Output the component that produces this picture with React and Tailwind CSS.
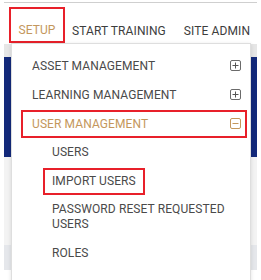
import React from 'react';

const PlusBox = ({ minus }) => (
  <span
    className={`flex h-[11px] w-[11px] items-center justify-center rounded-[2px] border ${
      minus ? 'border-[#c4975c]' : 'border-[#6b6b6b]'
    }`}
  >
    <svg width="7" height="7" viewBox="0 0 7 7">
      <line x1="0.5" y1="3.5" x2="6.5" y2="3.5" stroke={minus ? '#c4975c' : '#555'} strokeWidth="1" />
      {!minus && <line x1="3.5" y1="0.5" x2="3.5" y2="6.5" stroke="#555" strokeWidth="1" />}
    </svg>
  </span>
);

export default function App() {
  const subItems = ['USERS', 'IMPORT USERS', 'PASSWORD RESET REQUESTED USERS', 'ROLES'];

  return (
    <div
      className="relative h-[280px] w-[261px] overflow-hidden bg-white text-[12px] tracking-[0.1px] text-[#4a4a4a]"
      style={{ fontFamily: 'Roboto, "Liberation Sans", sans-serif' }}
    >
      {/* Top nav */}
      <div className="mx-1 mt-[2px] border-t border-[#cfcfcf]">
        <nav className="flex h-[40px] items-start pl-[5px] pt-[4px]">
          <div className="flex h-[36px] w-[56px] items-center justify-center border-[2.5px] border-[#e8202a] pt-[9px] text-[#c4975c]">
            SETUP
          </div>
          <div className="flex h-[36px] items-center pl-[7px] pt-[12px] text-[#3d3d3d]">START TRAINING</div>
          <div className="flex h-[36px] items-center pl-[18px] pt-[12px] text-[#3d3d3d]">SITE ADMIN</div>
        </nav>

        {/* Page background behind the dropdown */}
        <div className="mt-[1px] h-[13px] bg-[#e6e6e6]" />
        <div className="h-[100px] bg-[#13297a]" />
        <div className="h-[88px] bg-[#f3f3f3]" />
        <div className="h-[25px] bg-[#e5e7eb]" />
      </div>

      {/* Dropdown */}
      <div className="absolute left-[11px] top-[43px] h-[260px] w-[240px] border border-[#dedede] bg-white pt-[7px] shadow-[0_1px_4px_rgba(0,0,0,0.12)]">
        {['ASSET MANAGEMENT', 'LEARNING MANAGEMENT'].map((label) => (
          <div key={label} className="flex h-[29px] items-center justify-between pl-[20px] pr-[9px]">
            <span>{label}</span>
            <PlusBox />
          </div>
        ))}

        <div className="relative flex h-[29px] items-center justify-between pl-[20px] pr-[9px] text-[#c4975c]">
          <span className="absolute bottom-[0px] left-[9px] right-[3px] top-[1px] border-[2.5px] border-[#e8202a]" />
          <span>USER MANAGEMENT</span>
          <PlusBox minus />
        </div>

        <div className="pl-[40px] pr-[20px]">
          {subItems.map((label) => (
            <div key={label} className="flex items-center py-[7px] leading-[15px]">
              {label === 'IMPORT USERS' ? (
                <span className="-my-[6.5px] -ml-[9px] border-[2.5px] border-[#e8202a] px-[7px] py-[4px]">{label}</span>
              ) : (
                <span>{label}</span>
              )}
            </div>
          ))}
        </div>
      </div>
    </div>
  );
}
